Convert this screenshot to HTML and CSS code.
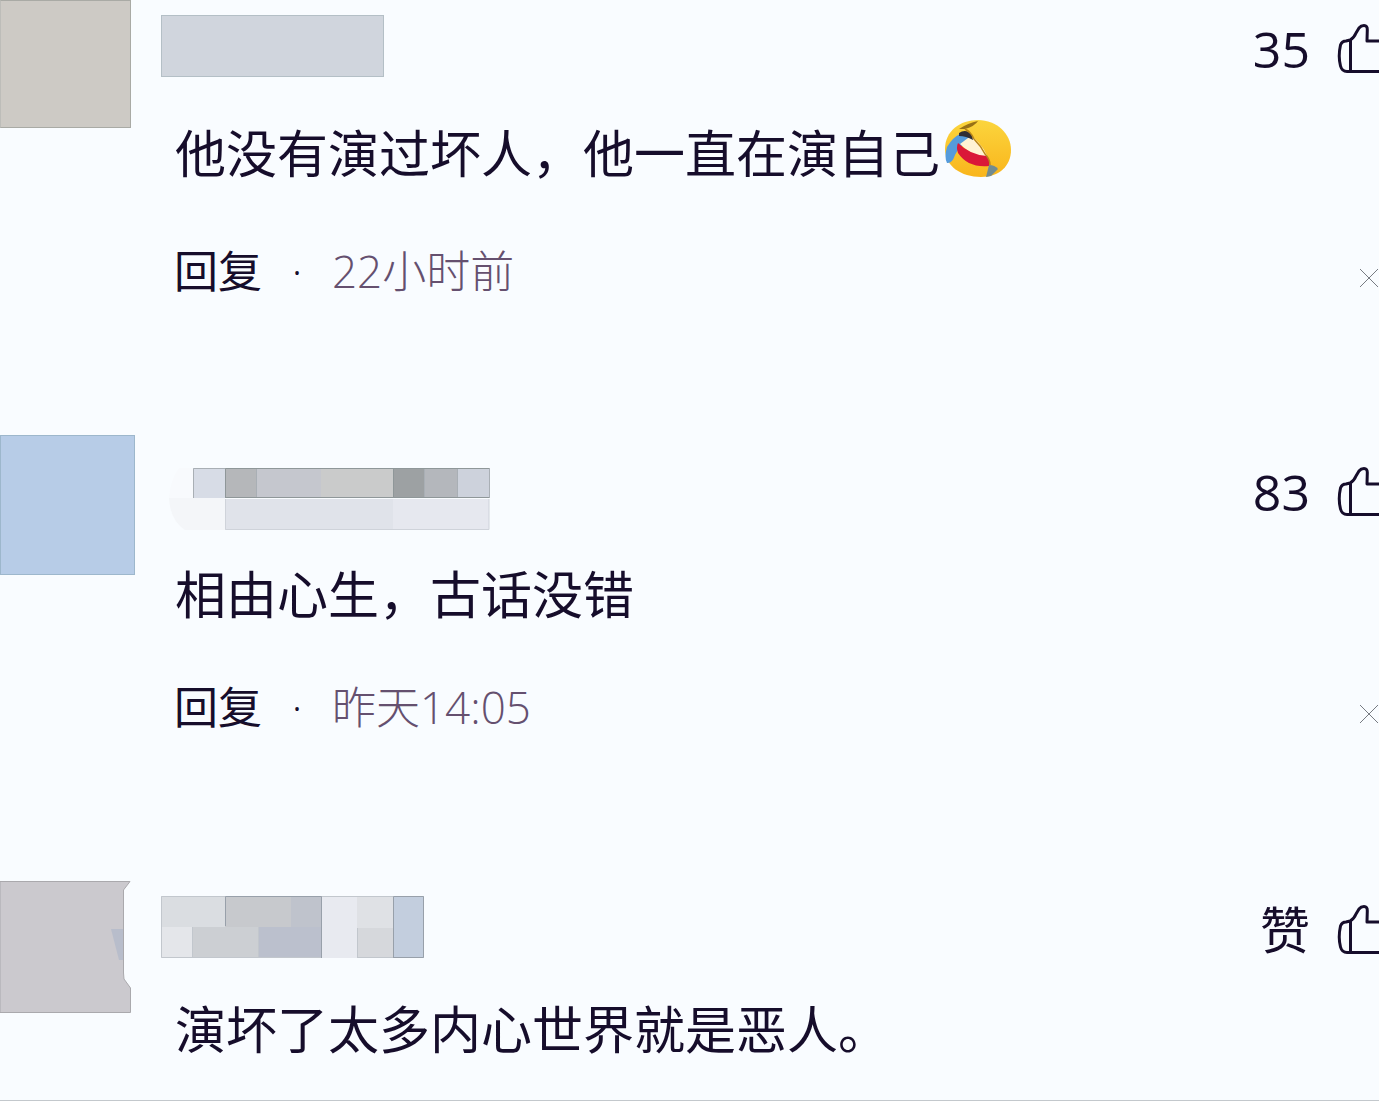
FILE: index.html
```html
<!DOCTYPE html>
<html lang="zh-CN">
<head>
    <meta charset="UTF-8">
    <meta name="viewport" content="width=device-width, initial-scale=1.0">
    <title>评论</title>
    <link rel="stylesheet" href="styles.css">
</head>
<body>
    <svg width="0" height="0" class="symbols" aria-hidden="true">
        <symbol id="thumb" viewBox="0 0 43 54">
            <path d="M14 18 L10 19 Q6 19 4.500 23 Q2 34 4.500 44 Q6 49.500 11 49.500 H43 M14.500 18 V49 M14 18 Q18 16 20 11 L23 6 Q25 3.500 28 3.500 Q31.500 3.500 31.300 8 L31 19 H43"/>
        </symbol>
        <symbol id="close" viewBox="0 0 20 20">
            <path d="M1 1 L19 19 M19 1 L1 19"/>
        </symbol>
    </svg>

    <main class="comments">
        <article class="comment first">
            <div class="avatar beige"></div>
            <div class="content">
                <header class="top">
                    <svg class="name" width="223" height="62" viewBox="0 0 223 62">
                        <rect x=".5" y=".5" width="222" height="61" fill="#d0d5dd" stroke="#b4bfc6"/>
                    </svg>
                    <button class="like"><span>35</span><svg><use href="#thumb"/></svg></button>
                </header>
                <p class="text">他没有演过坏人，他一直在演自己<svg class="emoji" viewBox="0 0 68 60">
                        <defs>
                            <linearGradient id="face" x1="0" y1="0" x2="0" y2="1">
                                <stop offset="0" stop-color="#fbd53d"/>
                                <stop offset="1" stop-color="#f9b51c"/>
                            </linearGradient>
                        </defs>
                        <path d="M1 30 C1 12 16 1 34 1 C53 1 67 15 67 31 C67 47 55 58 37 58 C17 58 1 47 1 30Z" fill="url(#face)"/>
                        <path d="M16 15 Q9 18 3 28 Q0 38 3 44 Q8 45 11 36 Q15 27 28 21 L24 16Z" fill="#559bdb"/>
                        <path d="M24 19 L30 19 Q41 29 45 42 Q27 36 16 25Z" fill="#fff2d4"/>
                        <path d="M14 24 Q26 36 43 37 Q46 40 45 47 Q24 49 14 34 Q12 28 14 24Z" fill="#da1738"/>
                        <path d="M15 14 Q22 9 28 16 L29 21 Q22 17 15 17Z" fill="#302e35"/>
                        <path d="M15 10 Q24 4 34 2 Q31 7 21 10Z" fill="#987116"/>
                        <path d="M21 10 Q27 13 30 20 Q37 27 41 35 Q46 40 46 46" fill="none" stroke="#ba8619" stroke-width="1.500"/>
                        <path d="M45 46 Q51 46 54 50 L47 57 L42 58Z" fill="#728b90"/>
                    </svg></p>
                <footer class="bottom">
                    <button class="reply">回复</button><span class="dot">·</span><time>22小时前</time>
                    <button class="close" aria-label="关闭"><svg><use href="#close"/></svg></button>
                </footer>
            </div>
        </article>

        <article class="comment second">
            <div class="avatar blue"></div>
            <div class="content">
                <header class="top">
                    <svg class="name" width="329" height="62" viewBox="0 0 329 62">
                        <path d="M8 30 H64 V62 H24 Q9 52 8 30Z" fill="#f4f6f9"/>
                        <path d="M32 0 V30 H8 Q9 12 18 0Z" fill="#f8fafd"/>
                        <rect x="32" y="0" width="32" height="30" fill="#d7dce6"/>
                        <rect x="64" y="0" width="31" height="30" fill="#b5b7ba"/>
                        <rect x="95" y="0" width="65" height="30" fill="#c5c7ce"/>
                        <rect x="160" y="0" width="72" height="30" fill="#cacbcb"/>
                        <rect x="232" y="0" width="31" height="30" fill="#9da1a3"/>
                        <rect x="263" y="0" width="33" height="30" fill="#b4b7bc"/>
                        <rect x="296" y="0" width="33" height="30" fill="#cdd2dc"/>
                        <rect x="64" y="31" width="168" height="31" fill="#e0e3ea"/>
                        <rect x="232" y="31" width="96" height="31" fill="#e6e8ef"/>
                        <path d="M32.500 30 V.5 H64 M95.500 0 V30 M263.500 0 V30 M296.500 0 V30 M328.500 0 V30" fill="none" stroke="#a9afb5"/>
                        <path d="M64.500 30 V.5 H328 M64 29.500 H232 M232.500 0 V29.500 H328" fill="none" stroke="#8f9799"/>
                        <path d="M64.500 31 V61.500 H328 V31" fill="none" stroke="#cfd3da"/>
                    </svg>
                    <button class="like"><span>83</span><svg><use href="#thumb"/></svg></button>
                </header>
                <p class="text">相由心生，古话没错</p>
                <footer class="bottom">
                    <button class="reply">回复</button><span class="dot">·</span><time>昨天14:05</time>
                    <button class="close" aria-label="关闭"><svg><use href="#close"/></svg></button>
                </footer>
            </div>
        </article>

        <article class="comment third">
            <svg class="avatar" viewBox="0 0 131 132">
                <path d="M0 .5 H130 L123.500 9 V92 L124 98 L130.500 107 V131.500 H0Z" fill="#cbc9ce" stroke="#aaa9ad"/>
                <path d="M111 48 H123 V79 H119Z" fill="#b8bdcb"/>
            </svg>
            <div class="content">
                <header class="top">
                    <svg class="name" width="263" height="62" viewBox="0 0 263 62">
                        <rect width="64" height="31" fill="#dadde1"/>
                        <rect x="64" width="75" height="31" fill="#c7c9cd"/>
                        <rect x="130" width="31" height="31" fill="#bfc3cc"/>
                        <rect y="31" width="31" height="31" fill="#e4e6ea"/>
                        <rect x="31" y="31" width="66" height="31" fill="#cccfd3"/>
                        <rect x="97" y="31" width="64" height="31" fill="#bbc0cd"/>
                        <rect x="161" width="35" height="62" fill="#e8eaf0"/>
                        <rect x="196" width="36" height="32" fill="#dfe1e5"/>
                        <rect x="196" y="32" width="36" height="30" fill="#d6d8dc"/>
                        <rect x="232" width="31" height="62" fill="#c3cede"/>
                        <path d="M64.500 30 V.5 H160.500 V62 M232.500 62 V.5 H262.500 V61.500 H232" fill="none" stroke="#98a0aa"/>
                        <path d="M64 .5 H.5 V61.500 H160 M31.500 61 V31 M97.500 61 V31 M161 .5 H232 M196.500 61 V32 M196 61.500 H232" fill="none" stroke="#c2c7cd"/>
                    </svg>
                    <button class="like"><span>赞</span><svg><use href="#thumb"/></svg></button>
                </header>
                <p class="text">演坏了太多内心世界就是恶人。</p>
            </div>
        </article>
    </main>
</body>
</html>
```

FILE: styles.css
```css
* {
    box-sizing: border-box;
}
body {
    margin: 0;
    background-color: #f9fcff;
    color: #160d2b;
    font-family: "Open Sans", "Noto Sans CJK SC", sans-serif;
    overflow-x: hidden;
}
.symbols {
    display: block;
}
.comments {
    border-bottom: 1px solid #c3c8cc;
}
.comment {
    display: flex;
    align-items: flex-start;
}
.avatar {
    flex: none;
    width: 131px;
    height: 132px;
}
.beige {
    height: 128px;
    background-color: #cdcac5;
    border: 1px solid #a9aaa5;
    border-left-color: #bdbdb9;
}
.blue {
    width: 135px;
    height: 140px;
    background-color: #b7cce7;
    border: 1px solid #9db7cc;
}
.content {
    flex: 1;
    padding-left: 30px;
}
.top {
    display: flex;
    justify-content: space-between;
    align-items: flex-start;
    height: 88px;
    padding-top: 15px;
}
.name {
    flex: none;
}
button {
    padding: 0;
    border: none;
    background: none;
    color: inherit;
    font-family: inherit;
    cursor: pointer;
}
.like {
    display: flex;
    align-items: center;
    gap: 26px;
    height: 68px;
    font-size: 50px;
    line-height: 66px;
}
.like svg {
    width: 43px;
    height: 54px;
    fill: none;
    stroke: #160d2b;
    stroke-width: 3;
    stroke-linejoin: round;
}
.text {
    display: flex;
    align-items: center;
    margin: 0;
    padding-left: 14px;
    font-size: 51px;
    line-height: 64px;
}
.emoji {
    width: 68px;
    height: 60px;
    margin: 0 0 8px 4px;
}
.bottom {
    display: flex;
    align-items: center;
    padding-left: 13px;
    font-size: 44px;
    line-height: 60px;
}
.reply {
    font-size: 44px;
    line-height: 60px;
}
.dot {
    width: 70px;
    font-weight: 300;
    text-align: center;
}
time {
    color: #65506f;
    font-weight: 300;
}
.close {
    margin-top: 14px;
    margin-left: auto;
}
.close svg {
    display: block;
    width: 20px;
    height: 20px;
    stroke: #777b82;
    stroke-width: 1;
}

.first {
    height: 435px;
}
.first .text {
    margin-top: 31px;
}
.first .bottom {
    margin-top: 54px;
}

.second {
    height: 446px;
}
.second .content {
    padding-left: 26px;
}
.second .top {
    height: 96px;
    padding-top: 23px;
}
.second .name {
    margin-top: 10px;
}
.second .text {
    margin-top: 31px;
}
.second .bottom {
    margin-top: 51px;
}

.third {
    height: 219px;
}
.third .text {
    margin-top: 28px;
}
```
